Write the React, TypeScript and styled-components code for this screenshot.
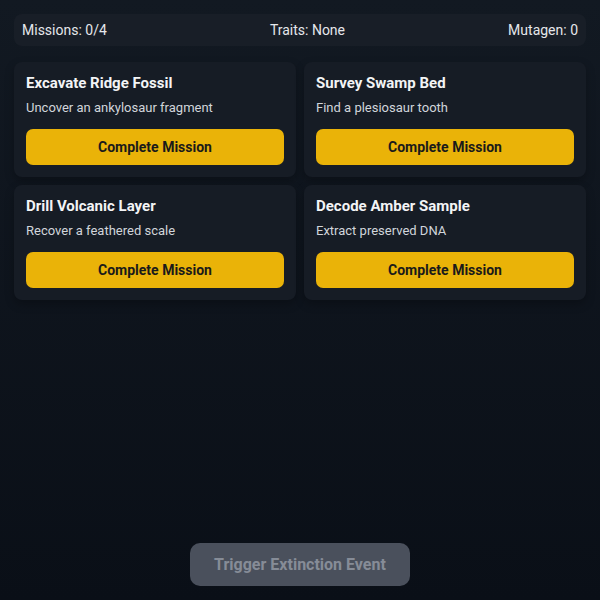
import React from 'react';
import styled, { createGlobalStyle } from 'styled-components';

const GlobalStyle = createGlobalStyle`
  html, body {
    margin: 0;
    padding: 0;
    height: 100%;
  }
  body {
    font-family: Roboto, "Liberation Sans", sans-serif;
    background: linear-gradient(180deg, #121922 0%, #0a0f17 100%);
    color: #e5e7eb;
  }
  #root {
    min-height: 100%;
  }
`;

const Page = styled.div`
  box-sizing: border-box;
  height: 600px;
  padding: 14px 14px 14px;
  display: flex;
  flex-direction: column;
`;

const StatusBar = styled.div`
  display: flex;
  justify-content: space-between;
  align-items: center;
  height: 32px;
  padding: 0 8px;
  border-radius: 8px;
  background: #181e27;
  font-size: 14px;
  color: #e5e7eb;
`;

const MissionGrid = styled.div`
  display: grid;
  grid-template-columns: 1fr 1fr;
  gap: 8px 8px;
  margin-top: 16px;
`;

const Card = styled.div`
  background: #161c25;
  border-radius: 8px;
  padding: 12px 12px 12px;
  box-shadow: 0 4px 10px rgba(0, 0, 0, 0.25);
`;

const CardTitle = styled.h3`
  margin: 0;
  font-size: 15px;
  font-weight: 700;
  line-height: 18px;
  color: #f3f4f6;
`;

const CardText = styled.p`
  margin: 7px 0 0;
  font-size: 13px;
  line-height: 18px;
  color: #d1d5db;
`;

const CompleteButton = styled.button`
  display: block;
  width: 100%;
  height: 36px;
  margin-top: 12px;
  border: none;
  border-radius: 7px;
  background: #eab308;
  color: #1a1a1a;
  font-family: Roboto, "Liberation Sans", sans-serif;
  font-size: 14px;
  font-weight: 700;
  cursor: pointer;
`;

const Footer = styled.div`
  margin-top: auto;
  display: flex;
  justify-content: center;
`;

const ExtinctionButton = styled.button`
  width: 220px;
  height: 43px;
  border: none;
  border-radius: 10px;
  background: #4a505c;
  color: #868c97;
  font-family: Roboto, "Liberation Sans", sans-serif;
  font-size: 16px;
  font-weight: 700;
  cursor: not-allowed;
`;

const missions = [
  { title: 'Excavate Ridge Fossil', text: 'Uncover an ankylosaur fragment' },
  { title: 'Survey Swamp Bed', text: 'Find a plesiosaur tooth' },
  { title: 'Drill Volcanic Layer', text: 'Recover a feathered scale' },
  { title: 'Decode Amber Sample', text: 'Extract preserved DNA' },
];

export default function App() {
  return (
    <>
      <GlobalStyle />
      <Page>
        <StatusBar>
          <span>Missions: 0/4</span>
          <span>Traits: None</span>
          <span>Mutagen: 0</span>
        </StatusBar>
        <MissionGrid>
          {missions.map((m) => (
            <Card key={m.title}>
              <CardTitle>{m.title}</CardTitle>
              <CardText>{m.text}</CardText>
              <CompleteButton>Complete Mission</CompleteButton>
            </Card>
          ))}
        </MissionGrid>
        <Footer>
          <ExtinctionButton disabled>Trigger Extinction Event</ExtinctionButton>
        </Footer>
      </Page>
    </>
  );
}
